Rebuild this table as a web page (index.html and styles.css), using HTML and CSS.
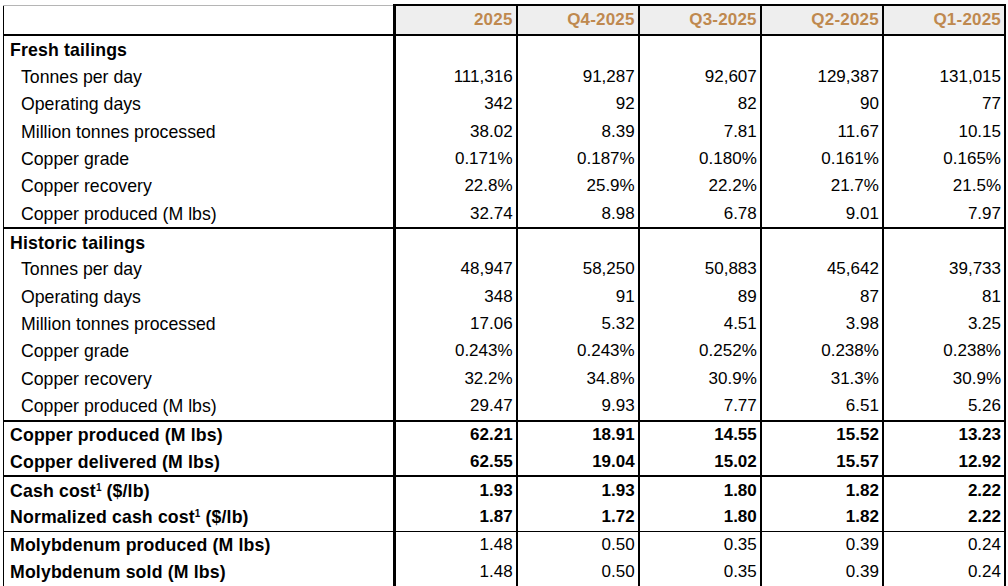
FILE: index.html
```html
<!DOCTYPE html>
<html lang="en">
<head>
<meta charset="utf-8">
<title>Operating results</title>
<link rel="stylesheet" href="styles.css">
</head>
<body>
<table class="ops">
  <colgroup>
    <col class="c-label">
    <col><col><col><col><col>
  </colgroup>
  <thead>
    <tr class="head">
      <th class="label"></th>
      <th>2025</th><th>Q4-2025</th><th>Q3-2025</th><th>Q2-2025</th><th>Q1-2025</th>
    </tr>
  </thead>
  <tbody class="sec first">
    <tr class="title"><td class="label">Fresh tailings</td><td></td><td></td><td></td><td></td><td></td></tr>
    <tr><td class="label ind">Tonnes per day</td><td>111,316</td><td>91,287</td><td>92,607</td><td>129,387</td><td>131,015</td></tr>
    <tr><td class="label ind">Operating days</td><td>342</td><td>92</td><td>82</td><td>90</td><td>77</td></tr>
    <tr><td class="label ind">Million tonnes processed</td><td>38.02</td><td>8.39</td><td>7.81</td><td>11.67</td><td>10.15</td></tr>
    <tr><td class="label ind">Copper grade</td><td>0.171%</td><td>0.187%</td><td>0.180%</td><td>0.161%</td><td>0.165%</td></tr>
    <tr><td class="label ind">Copper recovery</td><td>22.8%</td><td>25.9%</td><td>22.2%</td><td>21.7%</td><td>21.5%</td></tr>
    <tr><td class="label ind">Copper produced (M lbs)</td><td>32.74</td><td>8.98</td><td>6.78</td><td>9.01</td><td>7.97</td></tr>
  </tbody>
  <tbody class="sec">
    <tr class="title"><td class="label">Historic tailings</td><td></td><td></td><td></td><td></td><td></td></tr>
    <tr><td class="label ind">Tonnes per day</td><td>48,947</td><td>58,250</td><td>50,883</td><td>45,642</td><td>39,733</td></tr>
    <tr><td class="label ind">Operating days</td><td>348</td><td>91</td><td>89</td><td>87</td><td>81</td></tr>
    <tr><td class="label ind">Million tonnes processed</td><td>17.06</td><td>5.32</td><td>4.51</td><td>3.98</td><td>3.25</td></tr>
    <tr><td class="label ind">Copper grade</td><td>0.243%</td><td>0.243%</td><td>0.252%</td><td>0.238%</td><td>0.238%</td></tr>
    <tr><td class="label ind">Copper recovery</td><td>32.2%</td><td>34.8%</td><td>30.9%</td><td>31.3%</td><td>30.9%</td></tr>
    <tr><td class="label ind">Copper produced (M lbs)</td><td>29.47</td><td>9.93</td><td>7.77</td><td>6.51</td><td>5.26</td></tr>
  </tbody>
  <tbody class="sec bold">
    <tr><td class="label">Copper produced (M lbs)</td><td>62.21</td><td>18.91</td><td>14.55</td><td>15.52</td><td>13.23</td></tr>
    <tr><td class="label">Copper delivered (M lbs)</td><td>62.55</td><td>19.04</td><td>15.02</td><td>15.57</td><td>12.92</td></tr>
  </tbody>
  <tbody class="sec bold">
    <tr><td class="label">Cash cost<sup>1</sup> ($/lb)</td><td>1.93</td><td>1.93</td><td>1.80</td><td>1.82</td><td>2.22</td></tr>
    <tr><td class="label">Normalized cash cost<sup>1</sup> ($/lb)</td><td>1.87</td><td>1.72</td><td>1.80</td><td>1.82</td><td>2.22</td></tr>
  </tbody>
  <tbody class="sec last">
    <tr><td class="label strong">Molybdenum produced (M lbs)</td><td>1.48</td><td>0.50</td><td>0.35</td><td>0.39</td><td>0.24</td></tr>
    <tr><td class="label strong">Molybdenum sold (M lbs)</td><td>1.48</td><td>0.50</td><td>0.35</td><td>0.39</td><td>0.24</td></tr>
  </tbody>
</table>
</body>
</html>
```

FILE: styles.css
```css
html, body {
  margin: 0;
  padding: 0;
  background: #ffffff;
}

body {
  padding: 4px 0 0 3px;
  font-family: "Liberation Sans", Arial, sans-serif;
  font-size: 17px;
  color: #000;
}

.ops {
  border-collapse: collapse;
  table-layout: fixed;
  width: 1003px;
  border-left: 1px solid #000;
  border-right: 2px solid #000;
  border-bottom: 2px solid #000;
}

.c-label {
  width: 391px;
}

.ops th,
.ops td {
  padding: 0 3px 0 0;
  text-align: right;
  vertical-align: middle;
  white-space: nowrap;
  border-left: 2px solid #000;
  line-height: 20px;
}

.ops td {
  height: 27.35px;
}

.ops .sec:not(.first) tr:first-child td {
  height: 26.3px;
}

.ops .label {
  text-align: left;
  padding-left: 6px;
  font-size: 17.7px;
  border-left: 1px solid #000;
  border-right: 3px solid #000;
}

.ops .label.ind {
  padding-left: 17px;
}

.head th {
  height: 28px;
  background: #eeeeee;
  color: #bf894f;
  font-weight: bold;
  border-top: 2px solid #000;
  border-bottom: 2px solid #000;
  letter-spacing: 0.2px;
}

.head th.label {
  background: #ffffff;
  border-top: 1px solid #b5b5b5;
}

.sec {
  border-top: 2px solid #000;
}

.sec.last {
  border-top: 1.5px solid #000;
}

.title td {
  font-weight: bold;
  letter-spacing: 0.15px;
}

.bold td {
  font-weight: bold;
}

.bold td.label,
.label.strong {
  font-weight: bold;
  letter-spacing: 0.15px;
}

.ops sup {
  font-size: 10px;
  line-height: 0;
  vertical-align: 6px;
  letter-spacing: 0;
}
```
